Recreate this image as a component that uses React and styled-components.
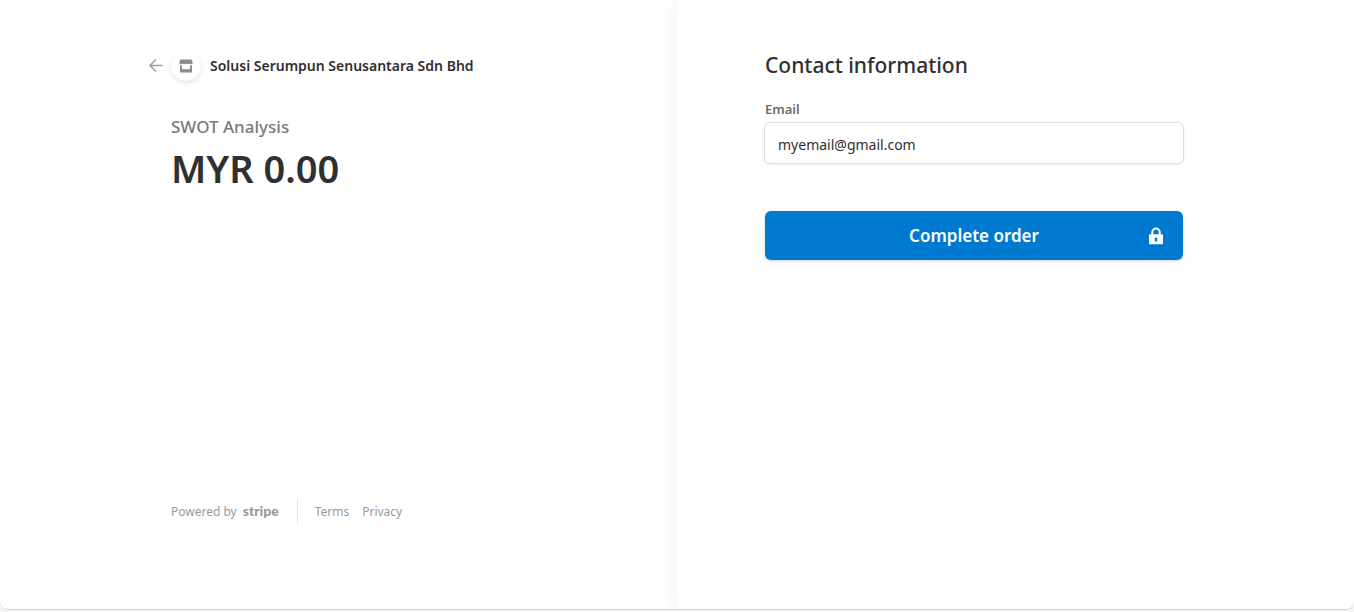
import {useState} from "react";
import styled, {createGlobalStyle} from "styled-components";

const App = () => {
    const [email, setEmail] = useState("myemail@gmail.com");

    return (
        <>
            <GlobalStyle />
            <Checkout>
                <SummaryPanel>
                    <Summary>
                        <Header>
                            <BackLink href="#back" aria-label="Back">
                                <ArrowIcon />
                            </BackLink>
                            <Avatar>
                                <StoreIcon />
                            </Avatar>
                            <MerchantName>Solusi Serumpun Senusantara Sdn Bhd</MerchantName>
                        </Header>
                        <ProductName>SWOT Analysis</ProductName>
                        <Amount>MYR 0.00</Amount>
                        <Footer>
                            <PoweredBy href="#stripe">
                                <span>Powered by</span>
                                <Wordmark>stripe</Wordmark>
                            </PoweredBy>
                            <FooterLinks>
                                <a href="#terms">Terms</a>
                                <a href="#privacy">Privacy</a>
                            </FooterLinks>
                        </Footer>
                    </Summary>
                </SummaryPanel>
                <PaymentPanel>
                    <Form onSubmit={(e) => e.preventDefault()}>
                        <Title>Contact information</Title>
                        <Label htmlFor="email">Email</Label>
                        <Input
                            id="email"
                            type="email"
                            value={email}
                            onChange={(e) => setEmail(e.target.value)}
                        />
                        <SubmitButton type="submit">
                            <span>Complete order</span>
                            <LockIcon />
                        </SubmitButton>
                    </Form>
                </PaymentPanel>
            </Checkout>
        </>
    );
};

const ArrowIcon = () => (
    <svg width="14" height="14" viewBox="0 0 14 14" fill="none" stroke="#a0a0a0" strokeWidth="1.6" strokeLinecap="round" strokeLinejoin="round" aria-hidden="true">
        <path d="M13 6.500H1.200M6.400 1L.9 6.500l5.500 5.500" />
    </svg>
);

const StoreIcon = () => (
    <svg width="14" height="14" viewBox="0 0 14 14" fill="#8c8c8c" aria-hidden="true">
        <path d="M2 .5h10c.5 0 .9.3 1 .8l.6 2.300c.2 1-.4 1.700-1.300 1.700-.8 0-1.300-.3-1.700-.8-.4.500-1 .8-1.800.8S7.400 5 7 4.500c-.4.500-1 .8-1.800.8S3.800 5 3.400 4.500c-.4.500-.9.8-1.700.8C.8 5.300.2 4.600.4 3.600l.6-2.300C1.100.8 1.500.5 2 .5z" />
        <path d="M1 6.200h1.900v4h8.200v-4H13v6.300c0 .6-.4 1-1 1H2c-.6 0-1-.4-1-1z" />
    </svg>
);

const LockIcon = () => (
    <svg width="16" height="18" viewBox="0 0 16 18" aria-hidden="true">
        <path d="M4.300 8V5.200a3.700 3.700 0 0 1 7.400 0V8" fill="none" stroke="#fff" strokeWidth="2" />
        <path fill="#fff" fillRule="evenodd" d="M2 7.200h12c.6 0 1 .4 1 1v8c0 .6-.4 1-1 1H2c-.6 0-1-.4-1-1v-8c0-.6.4-1 1-1zM8 10.400a1.200 1.200 0 0 0-1.200 1.200v1.800a1.200 1.200 0 0 0 2.400 0v-1.800A1.200 1.200 0 0 0 8 10.400z" />
    </svg>
);

const GlobalStyle = createGlobalStyle`
  * {
    box-sizing: border-box;
  }

  body {
    margin: 0;
    background: #f4f4f4;
    color: #303030;
    font-family: "Noto Sans", "Open Sans", sans-serif;
  }

  a {
    color: inherit;
    text-decoration: none;
  }
`;

const Checkout = styled.main`
  display: grid;
  grid-template-columns: 1fr 1fr;
  min-height: calc(100vh - 2px);
  margin-bottom: 2px;
  overflow: hidden;
  background: #fff;
  border-bottom: 1px solid #d4d4d4;
  border-radius: 0 0 8px 8px;
`;

const SummaryPanel = styled.section`
  display: flex;
  justify-content: flex-end;
  padding: 51px 88px 85px 24px;
`;

const Summary = styled.div`
  display: flex;
  flex-direction: column;
  width: 100%;
  max-width: 418px;
`;

const Header = styled.header`
  display: flex;
  align-items: center;
  margin: 0 0 32px -22px;
`;

const BackLink = styled.a`
  display: flex;
  width: 22px;
`;

const Avatar = styled.span`
  display: flex;
  align-items: center;
  justify-content: center;
  width: 30px;
  height: 30px;
  margin-right: 9px;
  border-radius: 50%;
  box-shadow: 0 2px 5px rgba(0, 0, 0, 0.12);
`;

const MerchantName = styled.span`
  font-size: 14px;
  line-height: 20px;
  font-weight: 600;
`;

const ProductName = styled.h1`
  margin: 0 0 5px;
  color: #7a7a7a;
  font-size: 17px;
  line-height: 28px;
  font-weight: 500;
`;

const Amount = styled.p`
  margin: 0;
  font-size: 38px;
  line-height: 44px;
  font-weight: 600;
`;

const Footer = styled.footer`
  display: flex;
  align-items: center;
  margin-top: auto;
  color: #999;
  font-size: 12px;
  line-height: 24px;
`;

const PoweredBy = styled.a`
  display: flex;
  align-items: baseline;
  gap: 6px;
  padding-right: 18px;
  border-right: 1px solid #e4e4e4;
`;

const Wordmark = styled.span`
  font-family: Lato, sans-serif;
  font-size: 14px;
  font-weight: 900;
`;

const FooterLinks = styled.nav`
  display: flex;
  gap: 13px;
  padding-left: 17px;
`;

const PaymentPanel = styled.section`
  padding: 51px 24px 85px 88px;
  box-shadow: 0 0 18px rgba(0, 0, 0, 0.07);
`;

const Form = styled.form`
  display: flex;
  flex-direction: column;
  max-width: 418px;
`;

const Title = styled.h2`
  margin: 0 0 20px;
  font-size: 21px;
  line-height: 28px;
  font-weight: 500;
`;

const Label = styled.label`
  margin-bottom: 3px;
  color: #6b6b6b;
  font-size: 13px;
  line-height: 20px;
  font-weight: 600;
`;

const Input = styled.input`
  height: 42px;
  margin: 0 -1px 47px;
  padding: 2px 13px 0;
  border: 1px solid #dedede;
  border-radius: 6px;
  outline: 0;
  background: #fff;
  box-shadow: 0 1px 3px rgba(0, 0, 0, 0.08);
  color: #303030;
  font-family: inherit;
  font-size: 14px;
`;

const SubmitButton = styled.button`
  display: grid;
  grid-template-columns: 1fr auto 1fr;
  align-items: center;
  height: 49px;
  padding: 0 19px;
  border: 0;
  border-radius: 6px;
  background: #0079d0;
  box-shadow: 0 1px 3px rgba(0, 0, 0, 0.18);
  color: #fff;
  font-family: inherit;
  font-size: 17px;
  line-height: 24px;
  font-weight: 600;
  cursor: pointer;

  span {
    grid-column: 2;
  }

  svg {
    justify-self: end;
  }
`;

export default App;
